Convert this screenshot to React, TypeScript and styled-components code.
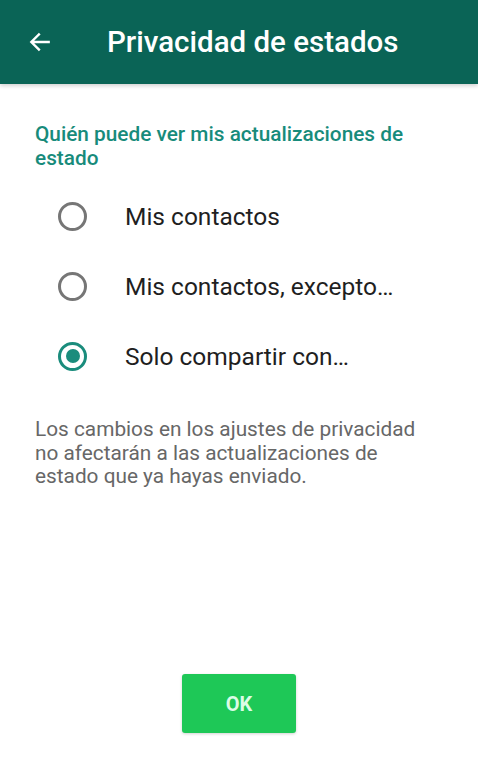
import React, { useState } from "react";
import styled, { createGlobalStyle } from "styled-components";

const GlobalStyle = createGlobalStyle`
  html, body {
    margin: 0;
    padding: 0;
    background: #ffffff;
    font-family: Roboto, "Noto Sans", "Liberation Sans", sans-serif;
  }
  * {
    box-sizing: border-box;
  }
`;

const Screen = styled.div`
  display: flex;
  flex-direction: column;
  min-height: 100vh;
  background: #ffffff;
`;

const Header = styled.header`
  height: 84px;
  display: flex;
  align-items: center;
  padding-left: 27px;
  background: #0a6456;
  box-shadow: 0 2px 4px rgba(0, 0, 0, 0.18);
`;

const BackButton = styled.button`
  display: flex;
  align-items: center;
  justify-content: center;
  width: 26px;
  height: 26px;
  padding: 0;
  border: none;
  background: transparent;
  cursor: pointer;
`;

const Title = styled.h1`
  margin: 0 0 0 54px;
  font-size: 29.5px;
  font-weight: 500;
  color: #ffffff;
`;

const Content = styled.main`
  padding: 38px 35px 0 35px;
`;

const SectionTitle = styled.h2`
  margin: 0;
  font-size: 20.8px;
  line-height: 24px;
  font-weight: 500;
  color: #178b7b;
`;

const OptionList = styled.div`
  display: flex;
  flex-direction: column;
  margin-top: 11px;
`;

const OptionRow = styled.label`
  display: flex;
  align-items: center;
  height: 70px;
  padding-left: 23px;
  cursor: pointer;
`;

const Radio = styled.span<{ $checked: boolean }>`
  display: flex;
  align-items: center;
  justify-content: center;
  flex-shrink: 0;
  width: 29px;
  height: 29px;
  border-radius: 50%;
  border: 3px solid ${(p) => (p.$checked ? "#1a8c7c" : "#767676")};

  &::after {
    content: "";
    display: ${(p) => (p.$checked ? "block" : "none")};
    width: 14px;
    height: 14px;
    border-radius: 50%;
    background: #1a8c7c;
  }
`;

const OptionLabel = styled.span`
  margin-left: 38px;
  font-size: 24.5px;
  color: #1f1f1f;
`;

const Note = styled.p`
  margin: 27px 0 0 0;
  font-size: 20.8px;
  line-height: 23.5px;
  color: #676767;
`;

const Footer = styled.div`
  display: flex;
  justify-content: center;
  margin-top: auto;
  padding-bottom: 31px;
`;

const OkButton = styled.button`
  width: 114px;
  height: 59px;
  border: none;
  border-radius: 3px;
  background: #1ec857;
  color: #dcfce6;
  font-family: Roboto, "Noto Sans", sans-serif;
  font-size: 20px;
  font-weight: 700;
  box-shadow: 0 1px 3px rgba(0, 0, 0, 0.18);
  cursor: pointer;
`;

const options = ["Mis contactos", "Mis contactos, excepto…", "Solo compartir con…"];

export default function App() {
  const [selected, setSelected] = useState(2);

  return (
    <>
      <GlobalStyle />
      <Screen>
        <Header>
          <BackButton aria-label="Atrás">
            <svg width="26" height="26" viewBox="0 0 24 24" fill="none">
              <path
                d="M20 12H4.5M11 5l-7 7 7 7"
                stroke="#ffffff"
                strokeWidth="2.2"
                strokeLinecap="square"
              />
            </svg>
          </BackButton>
          <Title>Privacidad de estados</Title>
        </Header>
        <Content>
          <SectionTitle>Quién puede ver mis actualizaciones de estado</SectionTitle>
          <OptionList>
            {options.map((label, i) => (
              <OptionRow key={label} onClick={() => setSelected(i)}>
                <Radio $checked={selected === i} />
                <OptionLabel>{label}</OptionLabel>
              </OptionRow>
            ))}
          </OptionList>
          <Note>
            Los cambios en los ajustes de privacidad no afectarán a las actualizaciones de
            estado que ya hayas enviado.
          </Note>
        </Content>
        <Footer>
          <OkButton>OK</OkButton>
        </Footer>
      </Screen>
    </>
  );
}
